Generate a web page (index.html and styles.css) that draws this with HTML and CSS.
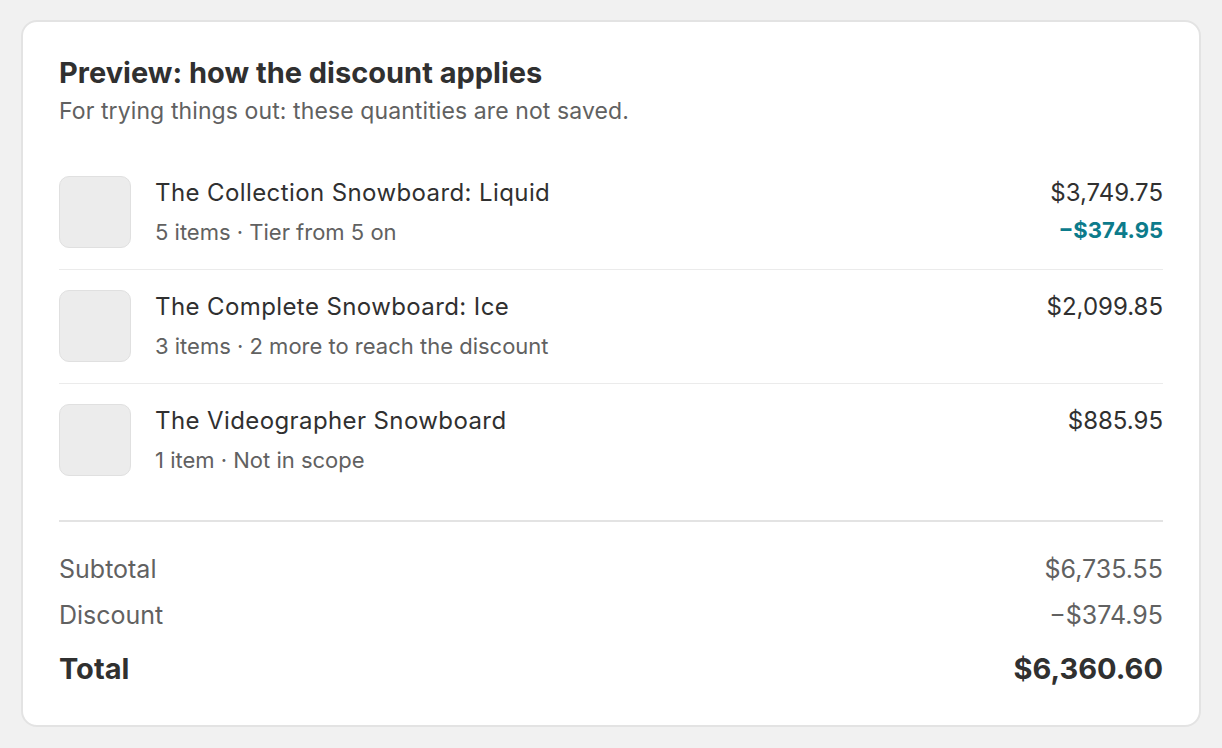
FILE: index.html
```html
<!DOCTYPE html>
<html lang="en">
<head>
<meta charset="utf-8">
<title>Preview</title>
<link rel="stylesheet" href="styles.css">
</head>
<body>
<section class="card">
  <header class="card-header">
    <h2 class="title">Preview: how the discount applies</h2>
    <p class="subtitle">For trying things out: these quantities are not saved.</p>
  </header>
  <ul class="lines">
    <li class="line">
      <div class="thumb"></div>
      <div class="info">
        <div class="name">The Collection Snowboard: Liquid</div>
        <div class="meta">5 items · Tier from 5 on</div>
      </div>
      <div class="amounts">
        <div class="price">$3,749.75</div>
        <div class="saving">−$374.95</div>
      </div>
    </li>
    <li class="line">
      <div class="thumb"></div>
      <div class="info">
        <div class="name">The Complete Snowboard: Ice</div>
        <div class="meta">3 items · 2 more to reach the discount</div>
      </div>
      <div class="amounts">
        <div class="price">$2,099.85</div>
      </div>
    </li>
    <li class="line">
      <div class="thumb"></div>
      <div class="info">
        <div class="name">The Videographer Snowboard</div>
        <div class="meta">1 item · Not in scope</div>
      </div>
      <div class="amounts">
        <div class="price">$885.95</div>
      </div>
    </li>
  </ul>
  <div class="summary">
    <div class="sum-row"><span>Subtotal</span><span>$6,735.55</span></div>
    <div class="sum-row"><span>Discount</span><span>−$374.95</span></div>
    <div class="sum-row total"><span>Total</span><span>$6,360.60</span></div>
  </div>
</section>
</body>
</html>
```
FILE: styles.css
```css
* { box-sizing: border-box; }
html, body { margin: 0; padding: 0; }
body {
  background: #f1f1f1;
  padding: 20px 21px;
  font-family: "Inter", "Noto Sans", sans-serif;
  color: #303030;
}
.card {
  background: #ffffff;
  border: 2px solid #e3e3e3;
  border-radius: 16px;
  padding: 35px 36px 36px;
}
.card-header { display: flex; flex-direction: column; }
.title {
  margin: 0;
  font-size: 29px;
  line-height: 32px;
  font-weight: 650;
  color: #303030;
}
.subtitle {
  margin: 8px 0 0;
  font-size: 23px;
  line-height: 28px;
  letter-spacing: 0.1px;
  color: #616161;
}
.lines {
  list-style: none;
  margin: 31px 0 0;
  padding: 0;
}
.line {
  display: flex;
  align-items: flex-start;
  gap: 24px;
  padding: 20px 0 21px;
  border-bottom: 1px solid #ebebeb;
}
.line:last-child { border-bottom: none; }
.thumb {
  width: 72px;
  height: 72px;
  flex: none;
  background: #ececec;
  border: 1px solid #e0e0e0;
  border-radius: 10px;
}
.info { flex: 1; display: flex; flex-direction: column; }
.name { font-size: 24px; line-height: 34px; letter-spacing: 0.4px; color: #303030; }
.meta { margin-top: 8px; font-size: 22px; line-height: 28px; color: #616161; }
.amounts { display: flex; flex-direction: column; align-items: flex-end; }
.price { font-size: 24px; line-height: 34px; color: #303030; }
.saving { margin-top: 6px; font-size: 22px; line-height: 28px; font-weight: 700; color: #0c7b8b; }
.summary {
  margin-top: 23px;
  border-top: 2px solid #e3e3e3;
  padding-top: 31px;
  display: flex;
  flex-direction: column;
}
.sum-row {
  display: flex;
  justify-content: space-between;
  font-size: 25px;
  line-height: 32px;
  color: #616161;
}
.sum-row + .sum-row { margin-top: 14px; }
.sum-row.total {
  margin-top: 18px;
  font-size: 29px;
  line-height: 40px;
  font-weight: 700;
  color: #303030;
}
```
